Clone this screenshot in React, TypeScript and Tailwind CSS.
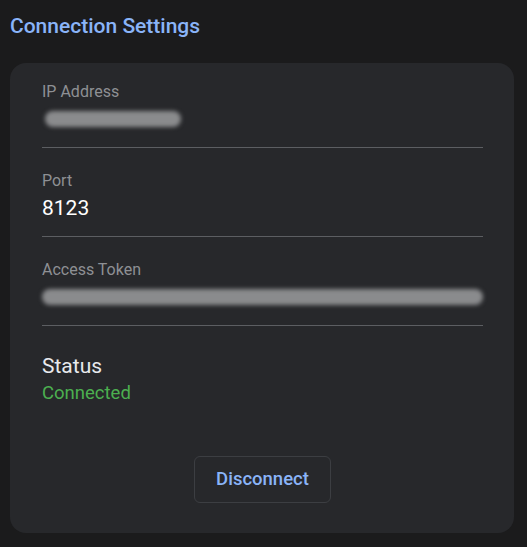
import { FunctionComponent, ReactNode } from "react";

type FieldProps = {
    label: string;
    children: ReactNode;
    first?: boolean;
};

const Field: FunctionComponent<FieldProps> = ({ label, children, first }) => {
    return (
        <div className={`flex flex-col border-b border-[#5c5e62] pb-[15px] ${first ? "" : "pt-[23px]"}`}>
            <span className="text-base leading-5 text-[#8e9094]">{label}</span>
            <div className="mt-1 flex h-[26px] items-center">{children}</div>
        </div>
    );
};

const Redacted = ({ width }: { width: string }) => (
    <div className={`h-[16px] ${width} rounded-full bg-[#8a8b8d] blur-[2px]`} />
);

export default function App() {
    return (
        <div className="min-h-[547px] w-full bg-[#1b1b1c] pl-[10px] pr-[13px] pt-3 pb-[14px] font-['Roboto',sans-serif]">
            <h1 className="text-[21px] font-medium leading-7 text-[#8ab4f8]">Connection Settings</h1>
            <div className="mt-[23px] flex flex-col rounded-2xl bg-[#27282b] pl-8 pr-[31px] pt-[19px] pb-[30px]">
                <Field label="IP Address" first>
                    <Redacted width="w-[136px] ml-[3px]" />
                </Field>
                <Field label="Port">
                    <span className="text-[21px] leading-[26px] text-white">8123</span>
                </Field>
                <Field label="Access Token">
                    <Redacted width="w-[446px]" />
                </Field>
                <div className="flex flex-col pt-[27px]">
                    <span className="text-[21px] leading-[26px] text-[#e8eaed]">Status</span>
                    <span className="mt-[2px] text-[18.5px] leading-6 text-[#4caf50]">Connected</span>
                </div>
                <div className="mt-[51px] flex justify-center">
                    <button className="h-[47px] w-[137px] rounded-md border border-[#3c3e42] text-[18.5px] font-medium text-[#8ab4f8]">
                        Disconnect
                    </button>
                </div>
            </div>
        </div>
    );
}
